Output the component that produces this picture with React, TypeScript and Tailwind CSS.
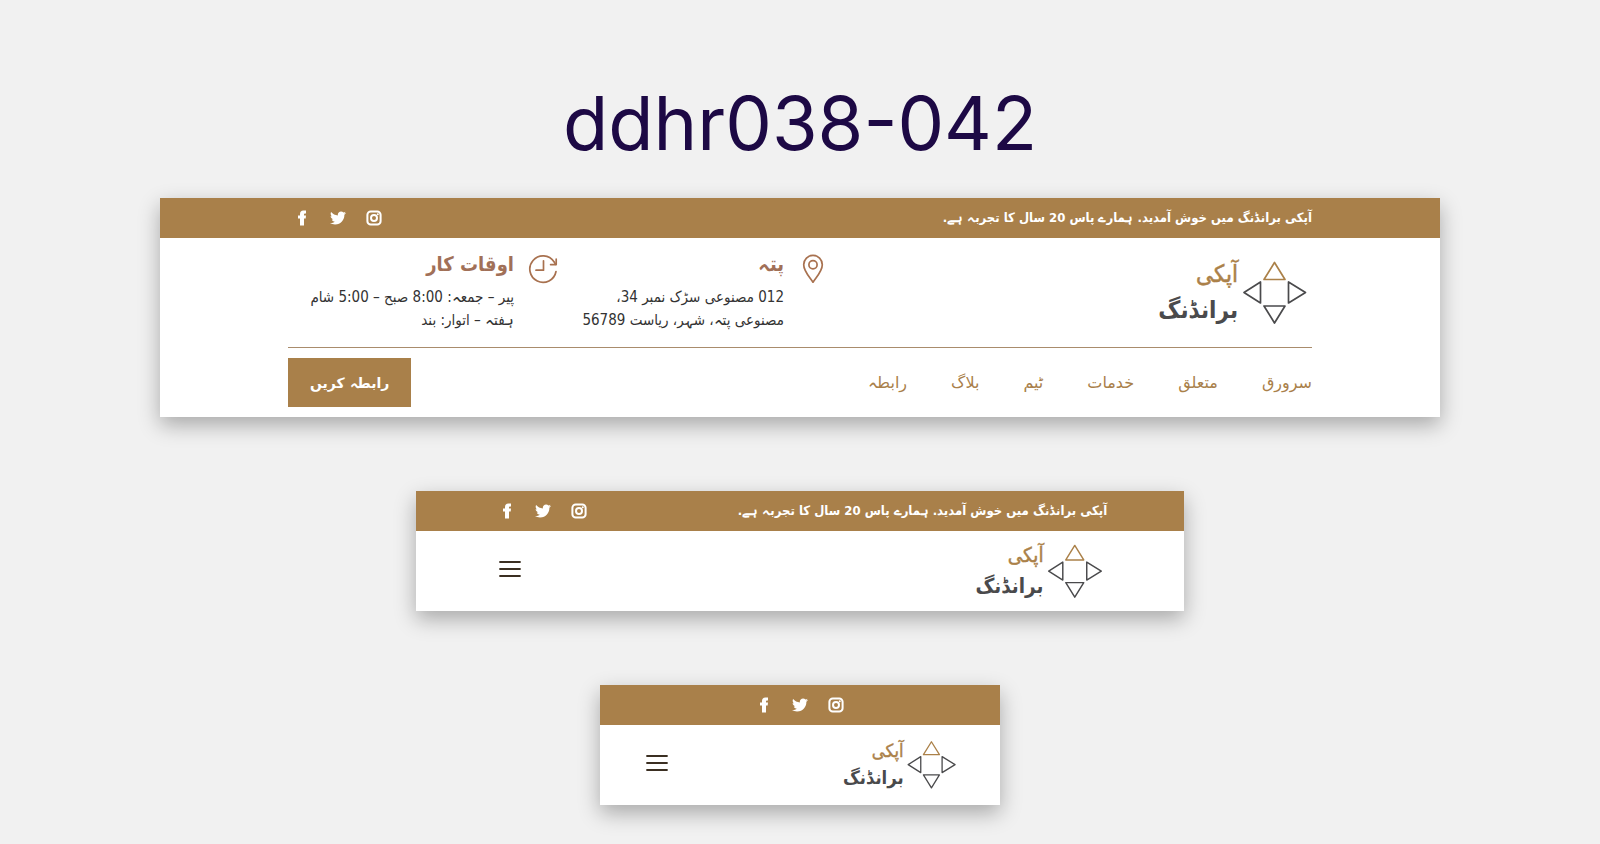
import { FaTwitter } from 'react-icons/fa';

const welcome = 'آپکی برانڈنگ میں خوش آمدید. ہمارے پاس 20 سال کا تجربہ ہے.';
const links = ['سرورق', 'متعلق', 'خدمات', 'ٹیم', 'بلاگ', 'رابطہ'];

function Logo({ className }: { className: string }) {
  return (
    <a href="#" aria-label="آپکی برانڈنگ" className="block">
      <svg viewBox="0 0 168 76" className={className} fill="none" strokeWidth="1.7" strokeLinejoin="round">
        <path d="M130.5 7.5 141 24.5H120Z" stroke="#ab8149" />
        <g stroke="#4a4a4c">
          <path d="M100 37.5 116.5 27V48Z" />
          <path d="M161.5 37.5 144.5 27V48Z" />
          <path d="M130.5 68 120 51H141Z" />
        </g>
        <g direction="rtl" stroke="none">
          <text x="94" y="27" fontSize="24" fill="#ab8149" stroke="#ab8149" strokeWidth="0.5">آپکی</text>
          <text x="94" y="63" fontSize="24" fontWeight="700" fill="#4a4a4c">برانڈنگ</text>
        </g>
      </svg>
    </a>
  );
}

function Social() {
  return (
    <ul className="flex items-center gap-5 text-white">
      <li>
        <a href="#" aria-label="Instagram" className="flex size-4 items-center justify-center">
          <svg viewBox="0 0 16 16" className="size-4" fill="none" stroke="currentColor" strokeWidth="2">
            <rect x="1.4" y="1.4" width="13.2" height="13.2" rx="3.4" />
            <circle cx="8" cy="8" r="3" />
            <circle cx="11.8" cy="4.2" r="1" fill="currentColor" stroke="none" />
          </svg>
        </a>
      </li>
      <li>
        <a href="#" aria-label="Twitter" className="flex size-4 items-center justify-center">
          <FaTwitter className="size-4" />
        </a>
      </li>
      <li>
        <a href="#" aria-label="Facebook" className="flex size-4 items-center justify-center">
          <svg viewBox="0 0 16 16" className="size-4" fill="currentColor">
            <path d="M6 15.5V8.6H4V5.6H6V4.2C6 1.9 7.2.6 9.4.6H12V3.6H10.9C10.3 3.6 10 3.8 10 4.4V5.6H12L11.7 8.6H10V15.5Z" />
          </svg>
        </a>
      </li>
    </ul>
  );
}

function MenuButton() {
  return (
    <button type="button" aria-label="Menu" className="flex h-8 items-start pt-1.5">
      <svg viewBox="0 0 22 16" className="h-4 w-[22px]" stroke="#3b2f22" strokeWidth="1.8" strokeLinecap="round">
        <path d="M1 1H21M1 8H21M1 15H21" />
      </svg>
    </button>
  );
}

function PinIcon() {
  return (
    <svg viewBox="0 0 30 30" className="size-[30px] shrink-0" fill="none" stroke="#a8714f" strokeWidth="1.7">
      <path d="M15 28.2C12.2 23.6 5.7 17.4 5.7 10.7A9.3 9.3 0 0 1 24.3 10.7C24.3 17.4 17.8 23.6 15 28.2Z" strokeLinejoin="round" />
      <circle cx="15" cy="10.7" r="4.1" />
    </svg>
  );
}

function ClockIcon() {
  return (
    <svg viewBox="0 0 30 30" className="size-[30px] shrink-0" fill="none" stroke="#a8714f" strokeWidth="1.7" strokeLinecap="round" strokeLinejoin="round">
      <path d="M28 17.5A13.2 13.2 0 1 1 26 7.8L27.6 10.4" />
      <path d="M28.2 5.2V10.6H22.6" />
      <path d="M15.5 6.8V16.2H8" />
    </svg>
  );
}

export default function App() {
  return (
    <div
      dir="rtl"
      className="flex min-h-screen flex-col items-center bg-[#f1f1f1] pt-[78px] pb-9 font-['DejaVu_Sans_Condensed','DejaVu_Sans',sans-serif]"
    >
      <h1 dir="ltr" className="font-['Inter',sans-serif] text-[74px] leading-[90px] font-normal text-[#1d0945]">
        ddhr038-042
      </h1>

      <header className="mt-[30px] w-4/5 bg-white shadow-[0_8px_20px_rgba(0,0,0,0.3)]">
        <div className="bg-[#a9804a]">
          <div className="mx-auto flex h-10 w-4/5 items-center justify-between">
            <p className="text-[13px] font-bold text-white">{welcome}</p>
            <div className="pl-1.5"><Social /></div>
          </div>
        </div>
        <div className="mx-auto w-4/5">
          <div className="flex items-center justify-between border-b border-[#a98c6c] pt-4 pb-[15px]">
            <Logo className="h-[76px] w-[168px]" />
            <div className="flex w-[540px] gap-5">
              <section className="flex w-[250px] gap-3.5">
                <PinIcon />
                <div>
                  <h2 className="text-xl leading-5 font-bold text-[#a17058]">پتہ</h2>
                  <p className="mt-3 text-[15px] leading-[23px] whitespace-nowrap text-[#333]">
                    012 مصنوعی سڑک نمبر 34،
                    <br />
                    مصنوعی پتہ، شہر، ریاست 56789
                  </p>
                </div>
              </section>
              <section className="flex gap-3.5">
                <ClockIcon />
                <div>
                  <h2 className="text-xl leading-5 font-bold text-[#a17058]">اوقات کار</h2>
                  <p className="mt-3 text-[15px] leading-[23px] whitespace-nowrap text-[#333]">
                    پیر – جمعہ: 8:00 صبح – 5:00 شام
                    <br />
                    ہفتہ – اتوار: بند
                  </p>
                </div>
              </section>
            </div>
          </div>
          <div className="flex items-center justify-between py-2.5 font-['DejaVu_Sans',sans-serif]">
            <nav>
              <ul className="flex gap-11 text-base text-[#a9804a]">
                {links.map((l) => (
                  <li key={l}>
                    <a href="#">{l}</a>
                  </li>
                ))}
              </ul>
            </nav>
            <button type="button" className="h-[49px] bg-[#a9804a] px-[22px] text-sm font-bold text-white">
              رابطہ کریں
            </button>
          </div>
        </div>
      </header>

      <header className="mt-[74px] w-[768px] max-w-full bg-white shadow-[0_8px_20px_rgba(0,0,0,0.3)]">
        <div className="bg-[#a9804a]">
          <div className="mx-auto flex h-10 w-4/5 items-center justify-between">
            <p className="text-[13px] font-bold text-white">{welcome}</p>
            <div className="pl-1.5"><Social /></div>
          </div>
        </div>
        <div className="mx-auto flex h-20 w-4/5 items-center justify-between pl-1.5">
          <Logo className="h-[65px] w-[144px]" />
          <MenuButton />
        </div>
      </header>

      <header className="mt-[74px] w-[400px] max-w-full bg-white shadow-[0_8px_20px_rgba(0,0,0,0.3)]">
        <div className="flex h-10 items-center justify-center bg-[#a9804a]">
          <Social />
        </div>
        <div className="mx-auto flex h-20 w-4/5 items-center justify-between pl-1.5">
          <Logo className="h-[58px] w-32" />
          <MenuButton />
        </div>
      </header>
    </div>
  );
}
